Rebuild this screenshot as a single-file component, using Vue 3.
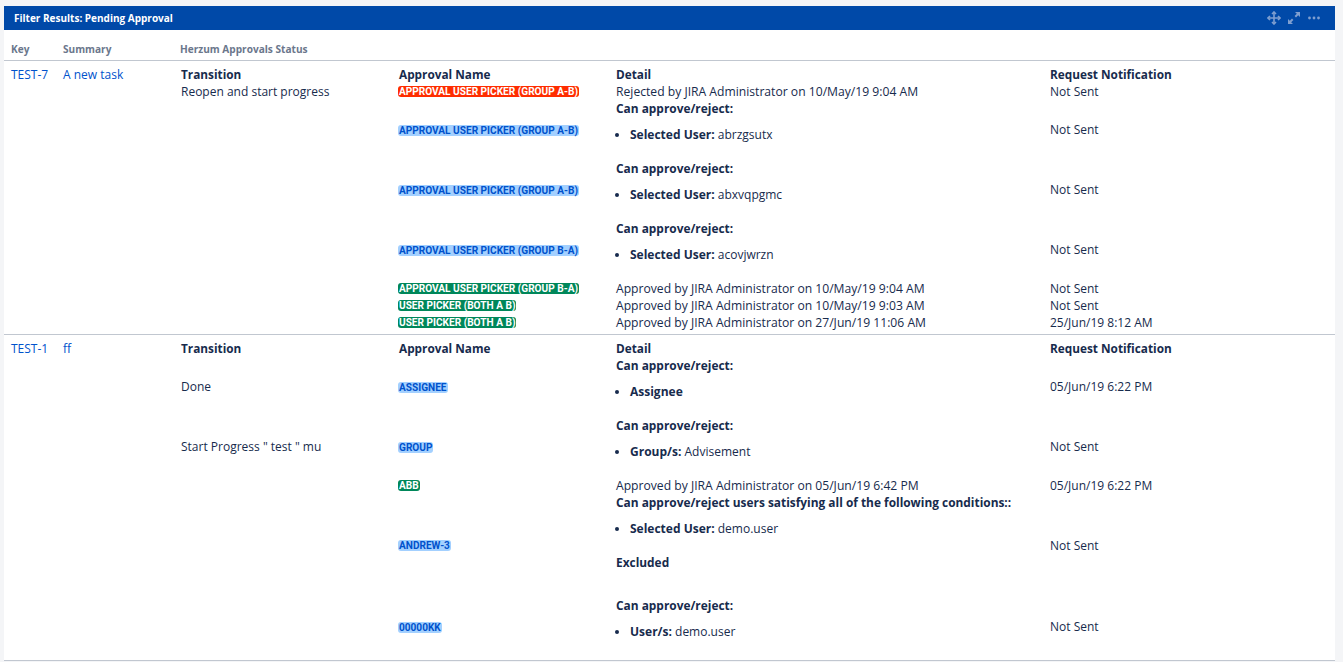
<script setup>
const rows = [
  {
    key: 'TEST-7', summary: 'A new task',
    items: [
      { t: 'Reopen and start progress', b: 'APPROVAL USER PICKER (GROUP A-B)', c: 'red', d: [{ text: 'Rejected by JIRA Administrator on 10/May/19 9:04 AM' }], n: 'Not Sent' },
      { b: 'APPROVAL USER PICKER (GROUP A-B)', c: 'blue', d: [{ head: 'Can approve/reject:' }, { li: 'Selected User:', v: 'abrzgsutx' }], n: 'Not Sent' },
      { b: 'APPROVAL USER PICKER (GROUP A-B)', c: 'blue', d: [{ head: 'Can approve/reject:' }, { li: 'Selected User:', v: 'abxvqpgmc' }], n: 'Not Sent' },
      { b: 'APPROVAL USER PICKER (GROUP B-A)', c: 'blue', d: [{ head: 'Can approve/reject:' }, { li: 'Selected User:', v: 'acovjwrzn' }], n: 'Not Sent' },
      { b: 'APPROVAL USER PICKER (GROUP B-A)', c: 'green', d: [{ text: 'Approved by JIRA Administrator on 10/May/19 9:04 AM' }], n: 'Not Sent' },
      { b: 'USER PICKER (BOTH A B)', c: 'green', d: [{ text: 'Approved by JIRA Administrator on 10/May/19 9:03 AM' }], n: 'Not Sent' },
      { b: 'USER PICKER (BOTH A B)', c: 'green', d: [{ text: 'Approved by JIRA Administrator on 27/Jun/19 11:06 AM' }], n: '25/Jun/19 8:12 AM' },
    ],
  },
  {
    key: 'TEST-1', summary: 'ff',
    items: [
      { t: 'Done', b: 'ASSIGNEE', c: 'blue', d: [{ head: 'Can approve/reject:' }, { li: 'Assignee', v: '' }], n: '05/Jun/19 6:22 PM' },
      { t: 'Start Progress " test " mu', b: 'GROUP', c: 'blue', d: [{ head: 'Can approve/reject:' }, { li: 'Group/s:', v: 'Advisement' }], n: 'Not Sent' },
      { b: 'ABB', c: 'green', d: [{ text: 'Approved by JIRA Administrator on 05/Jun/19 6:42 PM' }], n: '05/Jun/19 6:22 PM' },
      { b: 'ANDREW-3', c: 'blue', d: [{ head: 'Can approve/reject users satisfying all of the following conditions::' }, { li: 'Selected User:', v: 'demo.user' }, { head: 'Excluded', tail: true }], n: 'Not Sent' },
      { b: '00000KK', c: 'blue', d: [{ head: 'Can approve/reject:' }, { li: 'User/s:', v: 'demo.user' }], n: 'Not Sent' },
    ],
  },
]
</script>

<template>
  <div class="page">
    <section class="card">
      <header class="bar">
        <h1>Filter Results: Pending Approval</h1>
        <div class="tools">
          <svg width="14" height="14" viewBox="0 0 14 14" fill="none" stroke="currentColor" stroke-width="1.6">
            <path d="M7 1v12M1 7h12" />
            <path d="M5 3l2-2 2 2M5 11l2 2 2-2M3 5L1 7l2 2M11 5l2 2-2 2" />
          </svg>
          <svg width="14" height="14" viewBox="0 0 14 14" fill="currentColor">
            <path d="M8 1h5v5l-1.8-1.8-2.2 2.2-1.4-1.4 2.2-2.2zM6 13H1V8l1.8 1.8L5 7.6 6.4 9l-2.2 2.2z" />
          </svg>
          <svg width="14" height="14" viewBox="0 0 14 14" fill="currentColor">
            <circle cx="2.5" cy="7" r="1.4" /><circle cx="7" cy="7" r="1.4" /><circle cx="11.5" cy="7" r="1.4" />
          </svg>
        </div>
      </header>
      <table class="results">
        <colgroup><col class="c-key" /><col class="c-sum" /><col /></colgroup>
        <thead>
          <tr><th>Key</th><th>Summary</th><th>Herzum Approvals Status</th></tr>
        </thead>
        <tbody>
          <tr v-for="r in rows" :key="r.key">
            <td><a>{{ r.key }}</a></td>
            <td><a>{{ r.summary }}</a></td>
            <td class="status">
              <table class="inner">
                <colgroup><col class="i-t" /><col class="i-n" /><col class="i-d" /><col /></colgroup>
                <tbody>
                  <tr class="head"><td>Transition</td><td>Approval Name</td><td>Detail</td><td>Request Notification</td></tr>
                  <tr v-for="(it, i) in r.items" :key="i">
                    <td>{{ it.t }}</td>
                    <td><span class="badge" :class="it.c">{{ it.b }}</span></td>
                    <td>
                      <template v-for="(x, j) in it.d" :key="j">
                        <div v-if="x.text" class="plain">{{ x.text }}</div>
                        <div v-else-if="x.head" class="strong" :class="{ tail: x.tail }">{{ x.head }}</div>
                        <ul v-else><li><b>{{ x.li }}</b> {{ x.v }}</li></ul>
                      </template>
                    </td>
                    <td>{{ it.n }}</td>
                  </tr>
                </tbody>
              </table>
            </td>
          </tr>
        </tbody>
      </table>
    </section>
  </div>
</template>

<style>
html, body { margin: 0; background: #f4f5f7; }
</style>

<style scoped>
.page {
  height: 662px;
  box-sizing: border-box;
  padding: 6px 8px 0 4px;
  overflow: hidden;
  font-family: "Open Sans", "Noto Sans", sans-serif;
  font-size: 12px;
  line-height: 17px;
  color: #172b4d;
}
.card { background: #fff; height: 655px; }
.bar {
  height: 24px;
  background: #0049a8;
  display: flex;
  align-items: center;
  justify-content: space-between;
  padding: 0 14px 0 10px;
}
h1 { margin: 0; font-size: 10px; font-weight: 700; color: #fff; }
.tools { display: flex; gap: 6px; color: #7f9fd0; }
.results, .inner { border-collapse: collapse; width: 100%; table-layout: fixed; }
.results > thead th {
  height: 30px;
  box-sizing: border-box;
  padding: 9px 0 0 7px;
  text-align: left;
  font-size: 10.1px;
  font-weight: 700;
  color: #6b778c;
  border-bottom: 1px solid #c1c7d0;
}
.c-key { width: 52px; }
.c-sum { width: 117px; }
.results > tbody > tr > td {
  vertical-align: top;
  padding: 5px 0 3px 7px;
  border-bottom: 1px solid #c1c7d0;
}
.results > tbody > tr > td.status { padding: 5px 0 3px 8px; }
a { color: #0052cc; }
.i-t { width: 218px; }
.i-n { width: 217px; }
.i-d { width: 434px; }
.inner td { padding: 0; vertical-align: middle; }
.head td { font-size: 11.8px; font-weight: 700; }
.plain { font-size: 12.15px; }
.strong { font-size: 11.9px; font-weight: 700; }
.tail { margin-bottom: 26px; }
ul { margin: 9px 0 17px; padding: 0 0 0 14px; }
b { font-weight: 700; }
.badge {
  display: inline-block;
  height: 11px;
  line-height: 11px;
  margin: -1px 0 0 -1px;
  padding: 0 1px;
  border-radius: 3px;
  font-family: Roboto, "Open Sans", sans-serif;
  font-size: 10.1px;
  font-weight: 700;
  white-space: nowrap;
  vertical-align: middle;
}
.red { background: #ff2d00; color: #fff; }
.blue { background: #a3d0ff; color: #0052cc; }
.green { background: #00875a; color: #fff; }
</style>
